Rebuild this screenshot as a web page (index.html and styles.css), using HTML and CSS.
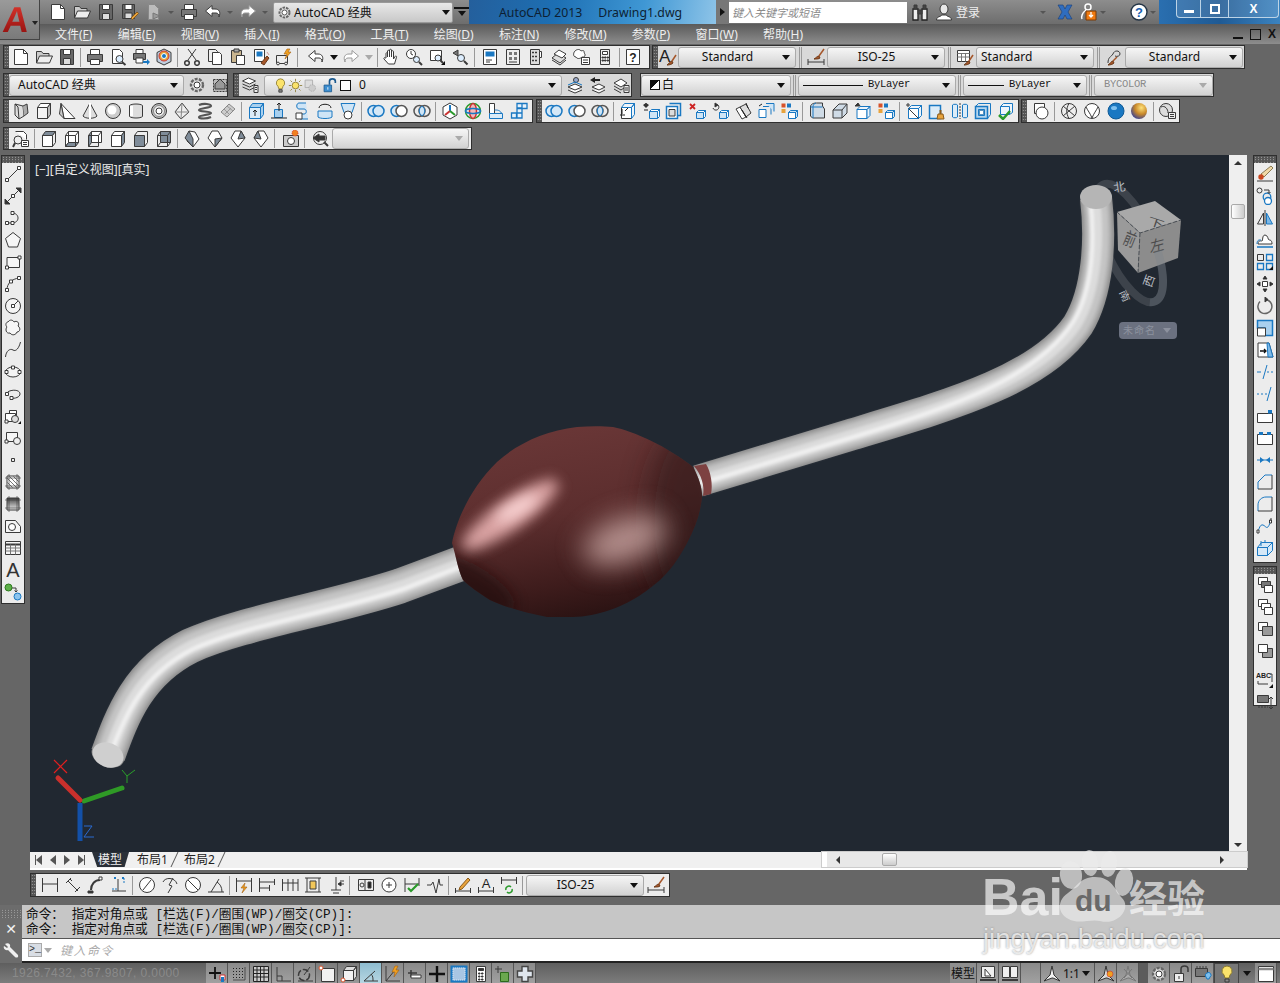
FILE: index.html
```html
<!DOCTYPE html>
<html lang="zh">
<head><meta charset="utf-8"><title>AutoCAD 2013</title><link rel="stylesheet" href="styles.css"></head>
<body>
<svg class="defs" width="0" height="0">
<defs>
<symbol id="new" viewBox="0 0 18 18"><path d="M2.5 1.5h9l4 4v11h-13z" fill="#fff"/><path d="M11.5 1.5v4h4"/></symbol>
<symbol id="open" viewBox="0 0 18 18"><path d="M1.5 15V3.5h5l1.5 2h6V8" fill="#ccc"/><path d="M1.5 15l3-7h13l-3 7z" fill="#eee"/></symbol>
<symbol id="save" viewBox="0 0 18 18"><path d="M2.5 1.5h13v15h-13z" fill="#666"/><path d="M5.5 1.5h7v5h-7z" fill="#fff"/><path d="M5.5 10.5h7v6h-7z" fill="#ddd"/></symbol>
<symbol id="saveas" viewBox="0 0 18 18"><path d="M1.5 1.5h12v14h-12z" fill="#666"/><path d="M4 1.5h7v5H4z" fill="#fff"/><path d="M4 10h7v5.500H4z" fill="#ddd"/><path d="M10 15l6-6 1.500 1.500-6 6z" fill="#e8a33c" stroke="#8a5a1a"/></symbol>
<symbol id="pubdoc" viewBox="0 0 18 18"><path d="M3.500 1.500h6l4 4v11h-10z" fill="#bbb" stroke="#888"/><path d="M8 10l7 3-7 3z" fill="#999" stroke="#777"/></symbol>
<symbol id="print" viewBox="0 0 18 18"><path d="M4.500 1.500h9v5h-9z" fill="#fff"/><path d="M1.500 6.500h15v7h-15z" fill="#777"/><path d="M4.500 11.500h9v5h-9z" fill="#fff"/></symbol>
<symbol id="preview" viewBox="0 0 18 18"><path d="M3.500 1.500h7l3 3v11h-10z" fill="#fff"/><circle cx="10.500" cy="11" r="3.500" fill="#def"/><path d="M13 14l3.500 3" stroke-width="2"/></symbol>
<symbol id="plot" viewBox="0 0 18 18"><path d="M4 1.500h7v4H4z" fill="#fff"/><path d="M1.500 5.500h12v6h-12z" fill="#777"/><path d="M4 10h7v5H4z" fill="#fff"/><path d="M11 13h4v-2l3 3-3 3v-2h-4z" fill="#1a78c2" stroke="none"/></symbol>
<symbol id="pub3d" viewBox="0 0 18 18"><path d="M9 1l7 3.500v9L9 17l-7-3.500v-9z" fill="#bfcfe0"/><circle cx="9" cy="8" r="5" fill="#e8a33c" stroke="#c33"/><circle cx="9" cy="8" r="2.500" fill="#1a78c2" stroke="#fff"/></symbol>
<symbol id="cut" viewBox="0 0 18 18"><path d="M5 1l8 11M13 1L5 12"/><circle cx="4" cy="15" r="2.300" stroke-width="1.500"/><circle cx="14" cy="15" r="2.300" stroke-width="1.500"/></symbol>
<symbol id="copy" viewBox="0 0 18 18"><path d="M2.500 1.500h7l2 2v10h-9z" fill="#eee"/><path d="M6.500 4.500h7l2 2v10h-9z" fill="#fff"/></symbol>
<symbol id="paste" viewBox="0 0 18 18"><path d="M2.500 2.500h10v12h-10z" fill="#c9b58f"/><path d="M5 1h5v3H5z" fill="#aaa"/><path d="M7.500 7.500h8v9h-8z" fill="#fff"/></symbol>
<symbol id="pblock" viewBox="0 0 18 18"><path d="M2.500 1.500h10v12h-10z" fill="#fff"/><path d="M4.500 3.500h6v5h-6z" fill="#1a78c2" stroke="none"/><path d="M9 15l6-7 2 2-5 7z" fill="#a5562a" stroke="#6b3a1a"/><path d="M15 4l2 3" stroke="#c99"/></symbol>
<symbol id="match" viewBox="0 0 18 18"><path d="M1.500 7.500h11v8h-11z" fill="#eee"/><circle cx="3" cy="15.500" r="1.400" fill="#fff"/><circle cx="11" cy="15.500" r="1.400" fill="#fff"/><path d="M12 1l-3 5h3l-2 5 6-7h-3l2-3z" fill="#f0a020" stroke="#a25e10" stroke-width=".6"/></symbol>
<symbol id="undo" viewBox="0 0 18 18"><path d="M8 2.500L1.500 8 8 13.500V10h4c2 0 3 1.500 3 4 2-5 0-8-4-8H8z" fill="#fff"/></symbol>
<symbol id="redo" viewBox="0 0 18 18"><path d="M10 2.500L16.500 8 10 13.500V10H6c-2 0-3 1.500-3 4-2-5 0-8 4-8h3z" fill="#fff" stroke="#9a9a9a"/></symbol>
<symbol id="hand" viewBox="0 0 18 18"><path d="M4 10V5.500c0-1 1.500-1 1.500 0V9 3c0-1 2-1 2 0v6V2c0-1 2-1 2 0v7-5.500c0-1 2-1 2 0V11l1.500-2.500c.7-1 2-.3 1.500.7L12.500 16h-6L2 11c-.6-1 .8-2 1.500-1z" fill="#fff"/></symbol>
<symbol id="zoomr" viewBox="0 0 18 18"><circle cx="6" cy="6" r="4.500" fill="#fff"/><path d="M6 3v3l2 1"/><circle cx="11.500" cy="11.500" r="3" fill="#def"/><path d="M14 14l3 3" stroke-width="2"/></symbol>
<symbol id="zoomw" viewBox="0 0 18 18"><path d="M2.500 2.500h11v10h-11z" fill="#fff"/><circle cx="10" cy="10" r="3" fill="#def"/><path d="M12.500 12.500l2.500 2.500" stroke-width="2"/><path d="M13 17l4-4v4z" fill="#111" stroke="none"/></symbol>
<symbol id="zoomp" viewBox="0 0 18 18"><path d="M7 2L2 5l5 3z" fill="#777"/><circle cx="10" cy="10" r="3.500" fill="#def"/><path d="M13 13l3.500 3.500" stroke-width="2"/></symbol>
<symbol id="props" viewBox="0 0 18 18"><path d="M2.500 1.500h13v15h-13z" fill="#fff"/><path d="M4.500 3.500h9v5h-9z" fill="#1a78c2" stroke="none"/><path d="M5 12h6M5 14h4"/></symbol>
<symbol id="center" viewBox="0 0 18 18"><path d="M2.500 1.500h13v15h-13z" fill="#eee"/><path d="M5 4h3v3H5zM10 4h3v3h-3zM5 9h3v3H5zM10 9h3v3h-3z" fill="#777" stroke="none"/><path d="M5 14h8"/></symbol>
<symbol id="palette" viewBox="0 0 18 18"><path d="M3.500 1.500h9v15h-9z" fill="#ddd"/><path d="M12.500 3.500h2v6h-2z" fill="#fff"/><path d="M5.500 4h1v1h-1zM8.500 4h1v1h-1zM5.500 8h1v1h-1zM8.500 8h1v1h-1zM5.500 12h1v1h-1zM8.500 12h1v1h-1z" fill="#555"/></symbol>
<symbol id="sheet" viewBox="0 0 18 18"><path d="M2 10l6-5 8 5-6 5z" fill="#ddd"/><path d="M4 6l5-4 7 4-4 4z" fill="#fff"/><path d="M2 12l8 5 6-5"/></symbol>
<symbol id="markup" viewBox="0 0 18 18"><path d="M2 3c2-2 5-2 6 0 2-1 4 0 3 2 2 1 1 5-2 4-2 2-5 2-6 0-3 0-3-4-1-6z" fill="#fff"/><path d="M8.500 9.500h8v7h-8z" fill="#fff"/><path d="M10 12h5M10 14.500h5"/></symbol>
<symbol id="calc" viewBox="0 0 18 18"><path d="M4.500 1.500h9v15h-9z" fill="#eee"/><path d="M6.500 3.500h5v3h-5z" fill="#fff"/><path d="M6 9h1.500v1H6zM8.500 9H10v1H8.500zM11 9h1.500v1H11zM6 12h1.500v1H6zM8.500 12H10v1H8.500zM11 12h1.500v1H11z" fill="#444"/></symbol>
<symbol id="help" viewBox="0 0 18 18"><path d="M2.500 1.500h13v15h-13z" fill="#fff"/><text x="9" y="14" font-size="12" font-family="Liberation Sans" font-weight="700" text-anchor="middle" fill="#222" stroke="none">?</text></symbol>
<symbol id="gear" viewBox="0 0 18 18"><circle cx="9" cy="9" r="6" fill="#ddd" stroke-dasharray="3 1.200" stroke-width="2.400" stroke="#666"/><circle cx="9" cy="9" r="3" fill="#fff"/></symbol>
<symbol id="wsset" viewBox="0 0 18 18"><path d="M2.500 3.500h13v12h-13z" fill="#bbb" stroke-dasharray="2 1"/><path d="M9 3l5 5v5H4V8z" fill="#999"/></symbol>
<symbol id="layers" viewBox="0 0 18 18"><path d="M1.500 5l6-3 7 3-6 3z" fill="#fff"/><path d="M1.500 8l7 3 6-3M1.500 11l7 3 6-3"/><path d="M13 9.500h4v7h-4z" fill="#eee"/><path d="M14 11.500h2M14 13.500h2"/></symbol>
<symbol id="laycur" viewBox="0 0 18 18"><circle cx="10" cy="4" r="2.500" fill="#9ac"/><path d="M2 11l7-3 7 3-7 3zM2 14l7 3 7-3" fill="#fff"/><path d="M2 9l7-3 7 3" stroke="#1a78c2"/></symbol>
<symbol id="layprev" viewBox="0 0 18 18"><path d="M1 4l5-3v2h5v2H6v2z" fill="#222" stroke="none"/><path d="M3 11l7-3 6 3-6 3zM3 14l7 3 6-3" fill="#fff"/></symbol>
<symbol id="laysnap" viewBox="0 0 18 18"><path d="M2 7l7-4 6 4-6 4z" fill="#fff"/><path d="M2 10l7 4 3-2M2 13l7 4"/><path d="M12 9.500h5v7h-5z" fill="#eee"/><path d="M13 12h3M13 14h3"/></symbol>
<symbol id="bulb" viewBox="0 0 18 18"><path d="M9 1a5 5 0 013 9l-1 3H7l-1-3A5 5 0 019 1z" fill="#fbe36b" stroke="#8a7a30"/><path d="M7 14h4v3H7z" fill="#888"/></symbol>
<symbol id="sun" viewBox="0 0 18 18"><circle cx="9" cy="9" r="4" fill="#fbe36b" stroke="#8a7a30"/><path d="M9 1v3M9 14v3M1 9h3M14 9h3M3 3l2 2M13 13l2 2M15 3l-2 2M3 15l2-2" stroke="#8a7a30"/></symbol>
<symbol id="vpfrz" viewBox="0 0 18 18"><path d="M2.500 2.500h9v9h-9z" fill="#ddd" stroke="#aaa"/><circle cx="11" cy="12" r="4" fill="#ccc" stroke="#aaa" stroke-dasharray="2 1"/></symbol>
<symbol id="lock" viewBox="0 0 18 18"><path d="M2.500 8.500h9v8h-9z" fill="#3d8ed0" stroke="#1c5a8f"/><path d="M9 8V4c0-4 7-4 7 0v2" stroke="#1c5a8f" stroke-width="2"/><path d="M7 11v3" stroke="#fff"/></symbol>
<symbol id="solid" viewBox="0 0 18 18"><path d="M3 2l8 2 1 10-5 3-4-4z" fill="#ddd"/><path d="M11 4l4-2 1 9-4 3" fill="#aaa"/><path d="M3 2l3 3 1 12"/></symbol>
<symbol id="box" viewBox="0 0 18 18"><path d="M2.500 5.500h10v11h-10z" fill="#f4f4f4"/><path d="M2.500 5.500l3-4h10l-3 4z" fill="#fff"/><path d="M12.500 5.500l3-4v11l-3 4z" fill="#bbb"/></symbol>
<symbol id="wedge" viewBox="0 0 18 18"><path d="M3 1.500l14 15H6z" fill="#fff"/><path d="M3 1.500L1.500 12 6 16.500z" fill="#ccc"/></symbol>
<symbol id="cone" viewBox="0 0 18 18"><path d="M9 1L2 14c2 3 12 3 14 0z" fill="#ddd"/><path d="M9 1v16" stroke="#fff" stroke-width="2"/></symbol>
<symbol id="sphere" viewBox="0 0 18 18"><circle cx="9" cy="9" r="7.500" fill="#ccc"/><circle cx="8" cy="8" r="4.500" fill="#fff" stroke="none"/></symbol>
<symbol id="cyl" viewBox="0 0 18 18"><path d="M2.500 3.500c2-2 11-2 13 0v11c-2 2-11 2-13 0z" fill="#ddd"/><path d="M4.500 4v10" stroke="#fff" stroke-width="3"/></symbol>
<symbol id="torus" viewBox="0 0 18 18"><circle cx="9" cy="9" r="7.500" fill="#bbb"/><circle cx="9" cy="9" r="5.500" fill="#eee" stroke="#888"/><circle cx="9" cy="9" r="3" fill="#fff"/></symbol>
<symbol id="pyr" viewBox="0 0 18 18"><path d="M9 1L2 10l6 7 8-7z" fill="#eee"/><path d="M9 1l-1 16M2 10l14 0" stroke="#888"/></symbol>
<symbol id="helix" viewBox="0 0 18 18"><path d="M3 3c5-2 12-1 12 1S3 6 3 8s12 1 12 3S3 13 3 15s8 2 12 0" stroke="#555" stroke-width="2.200"/></symbol>
<symbol id="plane" viewBox="0 0 18 18"><path d="M2 10l8-8 6 5-8 8z" fill="#ccc" stroke="#888"/><path d="M5 7l6 6M8 4l6 5M6 12l6-6" stroke="#999"/></symbol>
<symbol id="extrude" viewBox="0 0 18 18"><path d="M2.500 5.500h11v11h-11z" fill="#dcecf8" stroke="#1a78c2"/><path d="M2.500 5.500l3-4h11l-3 4zM13.500 5.500l3-4v11l-3 4z" fill="#a9d0ee" stroke="#1a78c2"/><path d="M8 14V9M6 10l2-2 2 2" stroke="#222"/></symbol>
<symbol id="press" viewBox="0 0 18 18"><path d="M4.500 7.500h8v8h-8z" fill="#a9d0ee" stroke="#1a78c2"/><path d="M9 9V1M7 3l2-2 2 2" stroke="#222"/><path d="M1 16h16" stroke="#222"/></symbol>
<symbol id="sweep" viewBox="0 0 18 18"><path d="M13 1H6C3 1 3 7 6 7h5c3 0 3 5 0 5H7v5h8" stroke="#1a78c2" fill="#cfe5f6"/><path d="M3 11h6v6H3z" fill="#fff"/></symbol>
<symbol id="revolve" viewBox="0 0 18 18"><path d="M3 6c0-5 12-5 12 0" stroke="#222"/><path d="M2 9h14v6c-2 2-12 2-14 0z" fill="#cfe5f6" stroke="#1a78c2"/></symbol>
<symbol id="loft" viewBox="0 0 18 18"><path d="M2 1.500h14l-3 9H5z" fill="#cfe5f6" stroke="#1a78c2"/><circle cx="9" cy="13" r="4" fill="#fff"/></symbol>
<symbol id="union" viewBox="0 0 18 18"><circle cx="6.500" cy="9" r="5.500" fill="#d5e8f7" stroke="#1a78c2" stroke-width="1.500"/><circle cx="11.500" cy="9" r="5.500" fill="#d5e8f7" stroke="#1a78c2" stroke-width="1.500"/></symbol>
<symbol id="subtr" viewBox="0 0 18 18"><circle cx="6.500" cy="9" r="5.500" fill="#d5e8f7" stroke="#1a78c2" stroke-width="1.500"/><circle cx="11.500" cy="9" r="5.500" fill="#fff" stroke="#555" stroke-width="1.500"/></symbol>
<symbol id="inter" viewBox="0 0 18 18"><circle cx="6.500" cy="9" r="5.500" stroke="#555" stroke-width="1.500"/><circle cx="11.500" cy="9" r="5.500" stroke="#555" stroke-width="1.500"/><path d="M9 4.200a5.500 5.500 0 010 9.600 5.500 5.500 0 010-9.600z" fill="#cfe5f6" stroke="#1a78c2"/></symbol>
<symbol id="move3" viewBox="0 0 18 18"><path d="M9 1l7 4v8l-7 4-7-4V5z" fill="#fff"/><path d="M9 9V3" stroke="#1a78c2" stroke-width="2"/><path d="M9 9l-5 4" stroke="#c33" stroke-width="2"/><path d="M9 9l5 4" stroke="#2a9a2a" stroke-width="2"/></symbol>
<symbol id="rot3" viewBox="0 0 18 18"><ellipse cx="9" cy="9" rx="7.500" ry="7.500" stroke="#2a9a2a" stroke-width="1.500"/><ellipse cx="9" cy="9" rx="3.500" ry="7.500" stroke="#c33" stroke-width="1.500" fill="#f3b7b7"/><ellipse cx="9" cy="9" rx="7.500" ry="2.500" stroke="#1a78c2" stroke-width="1.500"/></symbol>
<symbol id="align3" viewBox="0 0 18 18"><path d="M2.500 1.500h5v10h-5z" fill="#fff"/><path d="M2.500 11.500h13v5h-13z" fill="#dcecf8" stroke="#1a78c2"/><path d="M7.500 8c3 0 5 0 7 3" stroke="#1a78c2"/></symbol>
<symbol id="array3" viewBox="0 0 18 18"><path d="M7 1.500h5v5H7zM12 1.500h5v5h-5zM1.500 11h5v5h-5zM7 11h5v5H7zM7 6h5v5H7z" stroke="#1a78c2" stroke-width="1.300" fill="#e7f2fb"/></symbol>
<symbol id="cubef" viewBox="0 0 18 18"><path d="M2.500 5.500h10v11h-10z" fill="#fff"/><path d="M2.500 5.500l3-4h10l-3 4zM12.500 5.500l3-4v11l-3 4z" fill="#eef5fb" stroke="#1a78c2"/><path d="M3 12V7M1 13h5M6 9l3-3" stroke="#222"/></symbol>
<symbol id="movef" viewBox="0 0 18 18"><path d="M4 5V1M2 3h4M6 8H2" stroke="#222"/><path d="M1 3l3-2 3 2-3 3z" fill="#333" stroke="none"/><path d="M7.500 9.500h8v7h-8z" fill="#cfe5f6" stroke="#1a78c2"/><path d="M7.500 9.500l2-2h8l-2 2zM15.500 9.500l2-2v7l-2 2z" fill="#fff" stroke="#1a78c2"/></symbol>
<symbol id="offf" viewBox="0 0 18 18"><path d="M1.500 4.500h11v12h-11z" fill="#fff" stroke="#1a78c2" stroke-width="1.500"/><path d="M4.500 1.500h11v12h-3" stroke="#1a78c2" stroke-width="1.500"/><path d="M4 7.500h6v6.500H4z" fill="#ddd"/></symbol>
<symbol id="delf" viewBox="0 0 18 18"><path d="M2 2l5 5M7 2L2 7" stroke="#c22" stroke-width="1.800"/><path d="M8.500 10.500h7v6h-7z" fill="#cfe5f6" stroke="#1a78c2"/><path d="M8.500 10.500l2-2h7l-2 2zM15.500 10.500l2-2v6l-2 2z" fill="#fff" stroke="#1a78c2"/></symbol>
<symbol id="rotf" viewBox="0 0 18 18"><path d="M2 6a3 3 0 105-3" /><path d="M4 1l3 2-3 2z" fill="#222"/><path d="M8.500 10.500h7v6h-7z" fill="#cfe5f6" stroke="#1a78c2"/><path d="M8.500 10.500l2-2h7l-2 2zM15.500 10.500l2-2v6l-2 2z" fill="#fff" stroke="#1a78c2"/></symbol>
<symbol id="taper" viewBox="0 0 18 18"><path d="M2 7l4-2 6 10-4 2z" fill="#fff"/><path d="M6 5l6-3 5 9-5 4z" fill="#ddd"/><path d="M8 8l5 8M12 1l2 5" stroke="#222"/></symbol>
<symbol id="copyf" viewBox="0 0 18 18"><path d="M2 7.500h7v8H2z" fill="#fff" stroke="#1a78c2"/><path d="M6 4.500h8v8" stroke="#1a78c2"/><path d="M9 1.500h8v8" stroke="#1a78c2" fill="#cfe5f6"/><path d="M2 4l3-2" stroke="#222"/></symbol>
<symbol id="colorf" viewBox="0 0 18 18"><path d="M1.500 1.500h4v4h-4z" fill="#d7522a" stroke="none"/><path d="M7 1.500h4v4H7z" fill="#1a78c2" stroke="none"/><path d="M1.500 7h4v4h-4z" fill="#e8a33c" stroke="none"/><path d="M8.500 10.500h7v6h-7z" fill="#fff" stroke="#1a78c2"/><path d="M8.500 10.500l2-2h7l-2 2zM15.500 10.500l2-2v6l-2 2z" fill="#cfe5f6" stroke="#1a78c2"/></symbol>
<symbol id="fedge" viewBox="0 0 18 18"><path d="M2.500 5c0-3 3-4 6-4h6v3l2 3v9h-12l-2-2z" fill="#cfdbe6"/><path d="M2.500 5h12v0M8 1c-3 1-3 3-3 5v10" stroke="#1a78c2"/></symbol>
<symbol id="cedge" viewBox="0 0 18 18"><path d="M2 8l6-6h8v9l-5 5H2z" fill="#cfdbe6"/><path d="M2 8h9v8M11 8l5-6" /></symbol>
<symbol id="cpedge" viewBox="0 0 18 18"><path d="M1 4l3-3 2 3H4z" fill="#333"/><path d="M3 7.500h10v9H3z" fill="#fff" stroke="#1a78c2"/><path d="M3 7.500l3-3h10l-3 3zM13 7.500l3-3v9l-3 3z" fill="#eef5fb" stroke="#1a78c2"/></symbol>
<symbol id="imprint" viewBox="0 0 18 18"><path d="M1 3h4M3 1v4"/><path d="M3.500 6.500h10v10h-10z" fill="#fff" stroke="#1a78c2"/><path d="M3.500 6.500l3-3h10l-3 3zM13.500 6.500l3-3v10l-3 3z" fill="#eef5fb" stroke="#1a78c2"/><path d="M3.500 6.500l10 10"/></symbol>
<symbol id="clean" viewBox="0 0 18 18"><path d="M1.500 3.500h11v13h-11z" fill="#dcecf8" stroke="#1a78c2" stroke-width="1.500"/><path d="M9 17l1-5h5l1 5z" fill="#e8a33c" stroke="#8a5a1a"/><path d="M12.500 12V8" stroke="#8a5a1a" stroke-width="2"/></symbol>
<symbol id="separ" viewBox="0 0 18 18"><path d="M1.500 3c0-1 5-1 5 0v12c0 1-5 1-5 0z" fill="#dcecf8" stroke="#1a78c2"/><path d="M11.500 3c0-1 5-1 5 0v12c0 1-5 1-5 0z" fill="#dcecf8" stroke="#1a78c2"/><path d="M9 1v16" stroke-dasharray="2 1"/></symbol>
<symbol id="shell" viewBox="0 0 18 18"><path d="M1.500 4.500h12v12h-12z" fill="#b6d6ee" stroke="#1a78c2" stroke-width="1.500"/><path d="M1.500 4.500l3-3h12v11l-3 4" stroke="#1a78c2"/><path d="M4.500 7.500h6v6h-6z" fill="#5b93c0" stroke="#1a78c2"/><path d="M6 9h3v3H6z" fill="#fff" stroke="none"/></symbol>
<symbol id="check" viewBox="0 0 18 18"><path d="M3.500 4.500h9v8h-9zM3.500 4.500l3-3h9v9l-3 2" fill="#eef5fb" stroke="#1a78c2"/><path d="M2 13l4 4 7-8" stroke="#2a9a2a" stroke-width="2.500"/></symbol>
<symbol id="ball3" viewBox="0 0 18 18"><path d="M2.500 1.500h10v10h-10z" fill="#fff"/><circle cx="10" cy="11" r="6" fill="#fff"/></symbol>
<symbol id="wire" viewBox="0 0 18 18"><circle cx="9" cy="9" r="7.500" fill="#eee"/><path d="M3 4c4 3 8 7 12 10M15 4C11 7 7 11 3 14M9 1.500c-3 5-3 10 0 15"/></symbol>
<symbol id="hid" viewBox="0 0 18 18"><circle cx="9" cy="9" r="7.500" fill="#fff"/><path d="M3 5c2 4 4 6 6 11M15 5c-2 4-4 6-6 11"/></symbol>
<symbol id="concept" viewBox="0 0 18 18"><circle cx="9" cy="9" r="8" fill="#1a78c2" stroke="#0f5a96"/><ellipse cx="7" cy="6" rx="3" ry="2" fill="#7ec0ee" stroke="none"/></symbol>
<symbol id="real" viewBox="0 0 18 18"><defs><radialGradient id="rg" cx=".65" cy=".3" r=".8"><stop offset="0" stop-color="#ffe27a"/><stop offset=".5" stop-color="#c8882a"/><stop offset="1" stop-color="#2a3aa0"/></radialGradient></defs><circle cx="9" cy="9" r="8" fill="url(#rg)" stroke="none"/></symbol>
<symbol id="vsman" viewBox="0 0 18 18"><circle cx="7" cy="8" r="6.500" fill="#ddd"/><path d="M2 5c4-2 7 2 7 6" /><path d="M9.500 10.500h7v6h-7z" fill="#eee"/><path d="M11 12.500h4M11 14.500h4"/></symbol>
<symbol id="vman" viewBox="0 0 18 18"><path d="M3.500 1.500h8l3 3v5" fill="#fff"/><circle cx="6" cy="10" r="4" fill="#eee"/><path d="M3 13l-2 4" stroke-width="2"/><path d="M9.500 10.500h7v6h-7z" fill="#fff"/><path d="M11 12.500h4M11 14.500h4"/></symbol>
<symbol id="vtop" viewBox="0 0 18 18"><path d="M2.500 5.500h10v11h-10z" fill="#fff"/><path d="M2.500 5.500l3-4h10l-3 4z" fill="#7f8c99"/><path d="M12.500 5.500l3-4v11l-3 4z" fill="#eee"/></symbol>
<symbol id="vbot" viewBox="0 0 18 18"><path d="M5.500 1.500h10v11h-10z" fill="#fff"/><path d="M2.500 5.500l3-4v11l-3 4z" fill="#fff"/><path d="M2.500 16.500l3-4h10l-3 4z" fill="#7f8c99"/><path d="M2.500 5.500h10l3-4M12.500 5.500v11"/></symbol>
<symbol id="vleft" viewBox="0 0 18 18"><path d="M2.500 5.500l3-4v11l-3 4z" fill="#7f8c99"/><path d="M5.500 1.500h10v11h-10z" fill="#fff"/><path d="M2.500 5.500h10l3-4M12.500 5.500v11h-10"/></symbol>
<symbol id="vright" viewBox="0 0 18 18"><path d="M2.500 5.500h10v11h-10zM2.500 5.500l3-4h10l-3 4z" fill="#fff"/><path d="M12.500 5.500l3-4v11l-3 4z" fill="#7f8c99"/></symbol>
<symbol id="vfront" viewBox="0 0 18 18"><path d="M2.500 5.500l3-4h10v11l-3 4z" fill="#eee"/><path d="M2.500 5.500h10v11h-10z" fill="#7f8c99"/></symbol>
<symbol id="vback" viewBox="0 0 18 18"><path d="M5.500 1.500h10v11h-10z" fill="#7f8c99"/><path d="M2.500 5.500h10v11h-10zM2.500 5.500l3-4M12.500 5.500l3-4M2.500 16.500l3-4M12.500 16.500l3-4"/></symbol>
<symbol id="iso1" viewBox="0 0 18 18"><path d="M6 1l6 1 4 7-6 8-6-6z" fill="#fff"/><path d="M2 8l4-7 4 8v8z" fill="#7f8c99"/></symbol>
<symbol id="iso2" viewBox="0 0 18 18"><path d="M6 1h6l4 7-7 9-7-9z" fill="#fff"/><path d="M9 17V9l7-1z" fill="#7f8c99"/></symbol>
<symbol id="iso3" viewBox="0 0 18 18"><path d="M6 1h6l4 7-7 9-7-9z" fill="#fff"/><path d="M12 1l4 7-7 1z" fill="#7f8c99"/></symbol>
<symbol id="iso4" viewBox="0 0 18 18"><path d="M6 1h6l4 7-7 9-7-9z" fill="#fff"/><path d="M6 1L2 8l7 1z" fill="#7f8c99"/></symbol>
<symbol id="camera" viewBox="0 0 18 18"><path d="M1.500 5.500h15v11h-15z" fill="#ccc"/><circle cx="9" cy="11" r="3.500" fill="#fff"/><circle cx="13" cy="3" r="3" fill="#f08020" stroke="#c33" stroke-dasharray="1 1"/></symbol>
<symbol id="backv" viewBox="0 0 18 18"><circle cx="8" cy="8" r="6.500" fill="#eee"/><path d="M1 8l6-4v2h6v4H7v2z" fill="#333"/><path d="M12 12l4 4" stroke-width="2"/></symbol>
<symbol id="line" viewBox="0 0 18 18"><path d="M3 15L15 3"/><path d="M1.500 13.500h3v3h-3zM13.500 1.500h3v3h-3z" fill="#fff"/></symbol>
<symbol id="xline" viewBox="0 0 18 18"><path d="M3 15L15 3" /><path d="M1 17v-5l5 5zM17 1v5l-5-5z" fill="#333"/><path d="M7.500 9h3v3h-3z" fill="#fff" transform="translate(0 -1.500)"/></symbol>
<symbol id="pline" viewBox="0 0 18 18"><path d="M3 14h5c8 0 8-10 0-10"/><path d="M1.500 12.500h3v3h-3zM7 12.500h3v3H7zM7 2.500h3v3H7z" fill="#fff"/></symbol>
<symbol id="poly" viewBox="0 0 18 18"><path d="M9 1.500l7.500 6-3 8.500h-9l-3-8.500z" fill="#f6f6f6"/></symbol>
<symbol id="rect" viewBox="0 0 18 18"><path d="M3 4.500h12.500v10H3z" fill="#f6f6f6" /><path d="M1.500 13h3v3h-3zM14 3h3v3h-3z" fill="#fff"/></symbol>
<symbol id="arc" viewBox="0 0 18 18"><path d="M3 15C3 8 8 4 15 3"/><path d="M1.500 13.500h3v3h-3zM5.500 5h3v3h-3zM13.500 1.500h3v3h-3z" fill="#fff"/></symbol>
<symbol id="circ" viewBox="0 0 18 18"><circle cx="9" cy="9" r="7.500" fill="#f4f4f4"/><path d="M9 9l5-5"/><path d="M7.500 7.500h3v3h-3z" fill="#fff"/></symbol>
<symbol id="cloud" viewBox="0 0 18 18"><path d="M4 3c2-3 5-2 6 0 3-2 6 1 4 4 3 2 2 6-1 6-1 3-5 4-7 1-4 1-5-4-3-6-2-2-1-5 1-5z" fill="#f6f6f6"/></symbol>
<symbol id="spline" viewBox="0 0 18 18"><path d="M1.500 16C2 10 6 7 9 9c3 2 6-2 7.500-8" /></symbol>
<symbol id="ell" viewBox="0 0 18 18"><ellipse cx="9" cy="9" rx="7.500" ry="5" fill="#f4f4f4"/><path d="M1 7.500h3v3H1zM14 7.500h3v3h-3zM7.500 3h3v3h-3z" fill="#fff"/></symbol>
<symbol id="earc" viewBox="0 0 18 18"><path d="M3 9c-1-4 13-6 13 0 0 3-5 5-9 4"/><path d="M1.500 7.500h3v3h-3zM6 11.500h3v3H6z" fill="#fff"/></symbol>
<symbol id="insert" viewBox="0 0 18 18"><path d="M5.500 3.500h7v6h-7z" fill="#fff"/><path d="M1.500 6.500h10v8h-10z" fill="#fff"/><circle cx="11" cy="12" r="3.500" fill="#ddd"/><path d="M1 13h3v3H1z" fill="#fff"/><path d="M14 17l3-3v3z" fill="#111" stroke="none"/></symbol>
<symbol id="block" viewBox="0 0 18 18"><path d="M2.500 3.500h11v9h-11z" fill="#f6f6f6"/><circle cx="13" cy="12" r="3.500" fill="#eee"/><path d="M1 11h3v3H1z" fill="#fff"/></symbol>
<symbol id="point" viewBox="0 0 18 18"><path d="M7.500 7.500h3v3h-3z"/></symbol>
<symbol id="hatch" viewBox="0 0 18 18"><path d="M3 3h12v12H3z" fill="#fff"/><path d="M5 3l10 10M3 5l10 10M9 3l6 6M3 9l6 6" stroke="#777"/><path d="M1 5h16M1 13h16M5 1v16M13 1v16" stroke-width=".6"/></symbol>
<symbol id="grad" viewBox="0 0 18 18"><defs><linearGradient id="gg" x2="0" y2="1"><stop offset="0" stop-color="#444"/><stop offset="1" stop-color="#eee"/></linearGradient></defs><path d="M3 3h12v12H3z" fill="url(#gg)"/><path d="M1 5h16M1 13h16M5 1v16M13 1v16" stroke-width=".6"/></symbol>
<symbol id="region" viewBox="0 0 18 18"><path d="M1.500 3.500h10l5 6v6h-15z" fill="#f6f6f6"/><circle cx="8" cy="10" r="3.500" fill="#fff"/></symbol>
<symbol id="table" viewBox="0 0 18 18"><path d="M1.500 2.500h15v13h-15z" fill="#f6f6f6"/><path d="M1.500 5.500h15" stroke-width="2"/><path d="M1.500 9h15M1.500 12h15M6.500 5.500v10M11.500 5.500v10" stroke="#777"/></symbol>
<symbol id="addsel" viewBox="0 0 18 18"><circle cx="4.500" cy="4.500" r="3.500" fill="#5eb04a" stroke="#2c7a1c"/><circle cx="13.500" cy="13.500" r="3.500" fill="#8cc4ee" stroke="#1a78c2"/><path d="M8 5h4v4M10.500 7.500l1.500 1.500 1.500-1.500"/></symbol>
<symbol id="erase" viewBox="0 0 18 18"><path d="M1 16h16" /><path d="M15 1l2 2L8 12l-3-3z" fill="#f0d9a8" stroke="#8a7a50"/><circle cx="5" cy="12" r="2.700" fill="#c9471f" stroke="none"/></symbol>
<symbol id="copy2" viewBox="0 0 18 18"><circle cx="3.500" cy="3.500" r="2.500"/><circle cx="11" cy="10" r="3.800" stroke="#1a78c2" stroke-width="1.300"/><circle cx="12" cy="14" r="3.500" stroke="#1a78c2" stroke-width="1.300" fill="#fff"/><path d="M8 3h5v3M11.500 5l1.500 1.500L14.500 5"/></symbol>
<symbol id="mirror" viewBox="0 0 18 18"><path d="M7.500 4v11h-6z" /><path d="M10.500 4v11h6z" fill="#7db8e6" stroke="#1a78c2"/><path d="M9 1v16"/></symbol>
<symbol id="offset" viewBox="0 0 18 18"><path d="M2 13c0-4 3-3 4-3s0-6 3-6 3 5 4 5 3 0 3 4z" fill="#fff"/><path d="M1 16h16" stroke="#1a78c2" stroke-width="1.500"/><path d="M1 13c0-5 3-4 4-4" stroke="#1a78c2"/></symbol>
<symbol id="array" viewBox="0 0 18 18"><path d="M1.500 1.500h6v6h-6z"/><path d="M10.500 1.500h6v6h-6zM1.500 10.500h6v6h-6zM10.500 10.500h6v6h-6z" stroke="#1a78c2" stroke-width="1.300"/><path d="M13 17l4-4v4z" fill="#111" stroke="none"/></symbol>
<symbol id="move" viewBox="0 0 18 18"><path d="M9 1l-2 3h4zM9 17l-2-3h4zM1 9l3-2v4zM17 9l-3-2v4z" fill="#222"/><path d="M6.500 6.500h5v5h-5z" fill="#fff"/></symbol>
<symbol id="rotate" viewBox="0 0 18 18"><path d="M9 2.500a7 7 0 11-5 2" stroke-width="1.500" stroke="#666"/><path d="M9 0l3 2.500L9 5z" fill="#333"/></symbol>
<symbol id="scale" viewBox="0 0 18 18"><path d="M1.500 1.500h15v15H9V9H1.500z" fill="#a9d0ee" stroke="#1a78c2" stroke-width="1.500"/><path d="M1.500 9h8v8h-8z" fill="#fff"/></symbol>
<symbol id="stretch" viewBox="0 0 18 18"><path d="M2 2h11l4 14H2z" fill="#fff"/><path d="M11 2h2l4 14h-5z" fill="#7db8e6" stroke="#1a78c2"/><path d="M4 10h6M8 8l2 2-2 2" stroke="#111" stroke-width="1.300"/></symbol>
<symbol id="trim" viewBox="0 0 18 18"><path d="M1 9h4" stroke="#1a78c2"/><path d="M7 16l4-14" stroke="#1a78c2"/><path d="M11 9h2M15 9h2" stroke="#1a78c2" /></symbol>
<symbol id="extend" viewBox="0 0 18 18"><path d="M1 9h2M5 9h2M9 9h2" stroke="#1a78c2"/><path d="M11 16l4-14" stroke="#1a78c2"/></symbol>
<symbol id="brkp" viewBox="0 0 18 18"><path d="M1.500 6.500h15v9h-15z" fill="#fff"/><path d="M12 3h4v3.500h-4z" fill="#1a78c2" stroke="none"/></symbol>
<symbol id="brk" viewBox="0 0 18 18"><path d="M1.500 5.500h15v10h-15z" fill="#fff"/><path d="M3 3h4v3H3zM11 3h4v3h-4z" fill="#1a78c2" stroke="none"/></symbol>
<symbol id="join" viewBox="0 0 18 18"><path d="M1 9h16" stroke="#1a78c2"/><path d="M4 6l4 3-4 3zM14 6l-4 3 4 3z" fill="#1a78c2" stroke="none"/></symbol>
<symbol id="cham" viewBox="0 0 18 18"><path d="M2 16V9l7-7h7" stroke="#1a78c2"/><path d="M2 16h14V2" /></symbol>
<symbol id="fillet" viewBox="0 0 18 18"><path d="M2 16V10c0-5 4-8 8-8h6" stroke="#1a78c2"/><path d="M2 16h14V2" /></symbol>
<symbol id="blend" viewBox="0 0 18 18"><path d="M2 15c1-3 2-8 5-7s4 6 7-2" stroke="#1a78c2"/><path d="M1 13h2v3H1zM13.500 3h2v3h-2z" fill="#fff"/><path d="M15 1l0 3"/></symbol>
<symbol id="explode" viewBox="0 0 18 18"><path d="M1.500 8.500h10v8h-10zM1.500 8.500l4-5h11l-5 5zM11.500 8.500l5-5v8l-5 5z" stroke="#1a78c2" fill="#d5e8f7"/><path d="M5 2l0 5M9 1v3" stroke="#1a78c2"/></symbol>
<symbol id="ord1" viewBox="0 0 18 18"><path d="M2.500 1.500h9v7h-9z" fill="#fff"/><path d="M5.500 5.500h9v6h-9z" fill="#777"/><path d="M8.500 9.500h8v7h-8z" fill="#fff"/></symbol>
<symbol id="ord2" viewBox="0 0 18 18"><path d="M2.500 1.500h9v7h-9z" fill="#fff"/><path d="M5.500 5.500h9v6h-9z" fill="#fff"/><path d="M8.500 9.500h8v7h-8z" fill="#fff"/></symbol>
<symbol id="ord3" viewBox="0 0 18 18"><path d="M2.500 2.500h9v8h-9z" fill="#fff"/><path d="M6.500 6.500h10v9h-10z" fill="#999"/></symbol>
<symbol id="ord4" viewBox="0 0 18 18"><path d="M6.500 6.500h10v9h-10z" fill="#999"/><path d="M2.500 2.500h9v8h-9z" fill="#fff"/></symbol>
<symbol id="abc" viewBox="0 0 18 18"><text x="0" y="7" font-size="7" font-family="Liberation Sans" font-weight="700" fill="#222" stroke="none">ABC</text><path d="M14 3h2v8M2 10v3h10"/><path d="M13 17l4-4v4z" fill="#111" stroke="none"/></symbol>
<symbol id="txtsc" viewBox="0 0 18 18"><path d="M1.500 2.500h11v7h-11z" fill="#777"/><path d="M2 14h10" stroke-dasharray="2 1"/><path d="M15 4v12M13 6l2-2 2 2M13 14l2 2 2-2"/></symbol>
<symbol id="dlin" viewBox="0 0 18 18"><path d="M1.500 2v14M16.500 2v14M1.500 8h15"/></symbol>
<symbol id="dal" viewBox="0 0 18 18"><path d="M4 5l10 10M2 7l5-5M11 16l5-5M6 3l2 2"/></symbol>
<symbol id="darc" viewBox="0 0 18 18"><path d="M4 14C4 8 8 4 13 4" stroke-width="2"/><path d="M1 15h5v2H1z" fill="#333"/><path d="M12 1h3v3h-3z" fill="#fff"/></symbol>
<symbol id="dord" viewBox="0 0 18 18"><path d="M2 15h14M8 15V3" /><path d="M2 13h6M14 2v6" stroke="#1a78c2" stroke-dasharray="2 1"/><path d="M4 1h2v2H4zM12 1h2v2h-2z" fill="#1a78c2" stroke="none"/></symbol>
<symbol id="drad" viewBox="0 0 18 18"><circle cx="9" cy="9" r="7.500" fill="#fff"/><path d="M9 9l4-5M5 14l4-5"/></symbol>
<symbol id="djog" viewBox="0 0 18 18"><path d="M2 6c2-5 12-5 14 2M12 2L8 9l3 1-4 7"/></symbol>
<symbol id="ddia" viewBox="0 0 18 18"><circle cx="9" cy="9" r="7.500" fill="#fff"/><path d="M4 4l10 10"/></symbol>
<symbol id="dang" viewBox="0 0 18 18"><path d="M1 16h16M4 16l8-13"/><path d="M10 6c3 2 5 5 5 10" /></symbol>
<symbol id="dqk" viewBox="0 0 18 18"><path d="M1.500 2v14M16.500 2v14M1.500 5h15"/><path d="M10 7l-4 5h3l-2 5 5-6H9z" fill="#f0a020" stroke="#a25e10" stroke-width=".6"/></symbol>
<symbol id="dbase" viewBox="0 0 18 18"><path d="M1.500 2v14M1.500 6h15M1.500 12h10M16.500 3v6M11.500 9v6"/></symbol>
<symbol id="dcont" viewBox="0 0 18 18"><path d="M1.500 3v12M7 3v12M12 3v12M17 3v12M1.500 7H17"/></symbol>
<symbol id="dspc" viewBox="0 0 18 18"><path d="M1 2h16M1 16h16M3 2v14M15 2v14"/><path d="M6 5h6v8H6z" fill="#f2c75a"/></symbol>
<symbol id="dbrk" viewBox="0 0 18 18"><path d="M9 1v13M4 14h10M6 17h6M13 5h4M13 8h4" /><path d="M11 8l3-2v4z" fill="#222"/></symbol>
<symbol id="dtol" viewBox="0 0 18 18"><path d="M1.500 3.500h15v11h-15zM8 3.500v11"/><circle cx="5" cy="9" r="2"/><path d="M11 6h3v6h-3z" fill="#222"/></symbol>
<symbol id="dcen" viewBox="0 0 18 18"><circle cx="9" cy="9" r="7" fill="#fff"/><path d="M6 9h6M9 6v6"/></symbol>
<symbol id="dins" viewBox="0 0 18 18"><path d="M2 2v14M16 2v8M2 8h14"/><path d="M5 12l3 3 7-7" stroke="#2a9a2a" stroke-width="2.200"/></symbol>
<symbol id="djogl" viewBox="0 0 18 18"><path d="M1 9h4l2-3 3 11 3-14 1 6h3"/></symbol>
<symbol id="dedit" viewBox="0 0 18 18"><path d="M1.500 12v5M16.500 12v5M1.500 15h15"/><path d="M6 11L14 2l2 2-8 9-3 1z" fill="#e8a33c" stroke="#8a5a1a"/></symbol>
<symbol id="dtxt" viewBox="0 0 18 18"><path d="M1.500 11v6M16.500 11v6M1.500 15h15"/><text x="9" y="12" font-size="13" font-family="Liberation Sans" text-anchor="middle" fill="#222" stroke="none">A</text></symbol>
<symbol id="dupd" viewBox="0 0 18 18"><path d="M1.500 1v7M16.500 1v7M1.500 4h15"/><path d="M6 14a3 3 0 015-3M12 13a3 3 0 01-5 3" stroke="#2a9a2a" stroke-width="1.500"/></symbol>
<symbol id="dstyle" viewBox="0 0 18 18"><path d="M1 11v6M17 11v6M1 14h16"/><path d="M7 11c2-1 3-3 5-3l1 2c-1 1-3 1-6 1z" fill="#a5562a" stroke="#6b3a1a"/><path d="M12 8l5-7" stroke="#a5562a" stroke-width="1.500"/></symbol>
<symbol id="tstyle" viewBox="0 0 18 18"><text x="0" y="14" font-size="17" font-family="Liberation Sans" fill="#222" stroke="none">A</text><path d="M8 17c2-1 3-4 5-4l1 2c-1 1-3 2-6 2z" fill="#a5562a" stroke="#6b3a1a"/><path d="M13 13l4-6" stroke="#a5562a" stroke-width="1.500"/></symbol>
<symbol id="tbstyle" viewBox="0 0 18 18"><path d="M1.500 2.500h12v11h-12z" fill="#fff"/><path d="M1.500 5.500h12M1.500 9h12M5.500 5.500v8M9.500 5.500v8" stroke="#777"/><path d="M8 17c2-1 3-4 5-4l1 2c-1 1-3 2-6 2z" fill="#a5562a" stroke="#6b3a1a"/><path d="M13 13l4-6" stroke="#a5562a" stroke-width="1.500"/></symbol>
<symbol id="mlstyle" viewBox="0 0 18 18"><path d="M3 15C3 9 6 9 8 6c1-4 7-4 7 0 0 2-3 3-5 2"/><path d="M3 17c2-1 3-4 5-4l1 2c-1 1-3 2-6 2z" fill="#a5562a" stroke="#6b3a1a"/><path d="M8 13l4-4" stroke="#a5562a" stroke-width="1.500"/></symbol>
<symbol id="snapinf" viewBox="0 0 18 18"><path d="M1 8h12M7 2v12" stroke-width="1.800" stroke="#111"/><path d="M12 10h5v5h-5z" fill="#fff" stroke="#c33"/><path d="M13 12h3v5h-3z" fill="#1a78c2" stroke="none"/></symbol>
<symbol id="snap" viewBox="0 0 18 18"><path d="M3 3h1v1H3zM6 3h1v1H6zM9 3h1v1H9zM12 3h1v1h-1zM3 6h1v1H3zM6 6h1v1H6zM9 6h1v1H9zM12 6h1v1h-1zM3 9h1v1H3zM6 9h1v1H6zM9 9h1v1H9zM12 9h1v1h-1zM3 12h1v1H3zM6 12h1v1H6zM9 12h1v1H9zM12 12h1v1h-1z" fill="#222" stroke="none"/><path d="M15 2v13H3" stroke-width=".8"/></symbol>
<symbol id="grid" viewBox="0 0 18 18"><path d="M1.500 1.500h15v15h-15zM1.500 5h15M1.500 8.500h15M1.500 12h15M5 1.500v15M8.500 1.500v15M12 1.500v15" fill="#ccc" stroke="#222"/></symbol>
<symbol id="ortho" viewBox="0 0 18 18"><path d="M3 2v14h14M3 11h5v5"/></symbol>
<symbol id="polar" viewBox="0 0 18 18"><path d="M2 16h15"/><circle cx="8" cy="10" r="5.500" stroke-width="1.500" stroke-dasharray="6 2"/><path d="M8 10l6-8"/></symbol>
<symbol id="osnap" viewBox="0 0 18 18"><path d="M3.500 3.500h13v13h-13z" fill="#f2f2f2"/><circle cx="3" cy="3" r="2" fill="#fff" stroke="#d7522a"/></symbol>
<symbol id="osnap3" viewBox="0 0 18 18"><path d="M3.500 5.500h10v10h-10z" fill="#f2f2f2"/><path d="M3.500 5.500l3-4h10l-3 4zM13.500 5.500l3-4v10l-3 4z" fill="#ddd"/><circle cx="3" cy="15" r="2" fill="#fff" stroke="#d7522a"/></symbol>
<symbol id="ducs" viewBox="0 0 18 18"><path d="M2 16h14M2 16L13 6"/><path d="M9 9c2 2 2 4 2 7"/></symbol>
<symbol id="otrack" viewBox="0 0 18 18"><path d="M2 1v15h14M2 16L11 5"/><path d="M11 1l-3 6h3l-1 5 5-7h-3l2-4z" fill="#f0a020" stroke="#a25e10" stroke-width=".6"/></symbol>
<symbol id="dynp" viewBox="0 0 18 18"><path d="M2 8h9M5 5v7" stroke-width="1.500"/><path d="M5 10h10v3H5z" fill="#fff"/></symbol>
<symbol id="plus" viewBox="0 0 18 18"><path d="M9 1v16M1 9h16" stroke-width="2.400" stroke="#111"/></symbol>
<symbol id="transp" viewBox="0 0 18 18"><path d="M1.500 1.500h15v15h-15z" fill="#8ab4dc" stroke="#1a78c2" stroke-width="2"/><path d="M3 3h12v12H3z" fill="#a9c6e3" stroke="#fff" stroke-dasharray="1 1" stroke-width=".6"/></symbol>
<symbol id="qprop" viewBox="0 0 18 18"><path d="M4.500 1.500h9v15h-9z" fill="#fff"/><path d="M6.500 3.500h5v2h-5z" fill="#333"/><path d="M6.500 8h1.500v1H6.500zM9.500 8H11v1H9.500zM6.500 11h1.500v1H6.500zM9.500 11H11v1H9.500zM6.500 14h1.500v1H6.500zM9.500 14H11v1H9.500z" fill="#333"/></symbol>
<symbol id="selcyc" viewBox="0 0 18 18"><path d="M1 4h7M4 1v7"/><path d="M6.500 7.500h8v9h-8z" fill="#6aa84f" stroke="#2c6a1c"/></symbol>
<symbol id="cross" viewBox="0 0 18 18"><path d="M6 1.500h6V6h4.500v6H12v4.500H6V12H1.500V6H6z" fill="#dfe6ee" stroke="#444" stroke-width="1.400"/></symbol>
<symbol id="mdl" viewBox="0 0 18 18"><path d="M2.500 1.500h13v11h-13z" fill="#eee"/><path d="M6 4v7h6z" fill="#fff"/><path d="M1 15h16" stroke-width="2"/></symbol>
<symbol id="lyt" viewBox="0 0 18 18"><path d="M1.500 1.500h7v11h-7zM9.500 1.500h7v11h-7z" fill="#eee"/><path d="M1 15h16" stroke-width="2"/></symbol>
<symbol id="anno" viewBox="0 0 18 18"><path d="M9 1l2 9 6 6-7-3-1 0-8 3 6-6z" fill="#f2f2f2" stroke="#333"/></symbol>
<symbol id="anno2" viewBox="0 0 18 18"><path d="M9 1l2 9 6 6-7-3-1 0-8 3 6-6z" fill="#dadada" stroke="#333"/><circle cx="13" cy="9" r="3" fill="#f0a020" stroke="#c33" stroke-width=".6"/></symbol>
<symbol id="anno3" viewBox="0 0 18 18"><path d="M9 1l2 9 6 6-7-3-1 0-8 3 6-6z" fill="#aaa" stroke="#777"/><path d="M5 4l8 9M13 4l-8 9" stroke="#777"/></symbol>
<symbol id="unlock" viewBox="0 0 18 18"><path d="M2.500 8.500h9v8h-9z" fill="#eee"/><path d="M9 8V4c0-4 7-4 7 0v3" stroke-width="1.500"/><path d="M7 11v3"/></symbol>
<symbol id="hw" viewBox="0 0 18 18"><path d="M1.500 3.500h12v8h-12z" fill="#777"/><path d="M3 1v2M6 1v2M9 1v2M12 1v2"/><path d="M13 8a2.500 2.500 0 013 4l-1 2h-2l-1-2a2.500 2.500 0 011-4z" fill="#7ec0ee" stroke="#1a78c2"/></symbol>
<symbol id="win" viewBox="0 0 18 18"><path d="M1.500 1.500h15v15h-15z" fill="#fff"/><path d="M1.500 4h15" stroke-width="2.500" stroke="#888"/></symbol>
<symbol id="binoc" viewBox="0 0 18 18"><path d="M2 6h5v11H2zM11 6h5v11h-5z" fill="#eee" stroke="#222" stroke-width="1.300"/><path d="M3 2h3v4H3zM12 2h3v4h-3z" fill="#444"/><path d="M7 7h4v4H7z" fill="#444"/></symbol>
<symbol id="person" viewBox="0 0 18 18"><ellipse cx="9" cy="6" rx="4" ry="5" fill="#e8e8e8"/><path d="M1.500 17c0-4 5-3 5-5h5c0 2 5 1 5 5z" fill="#fff"/></symbol>
<symbol id="exch" viewBox="0 0 18 18"><path d="M2 2h5l2 4 2-4h5l-4 7 4 7h-5l-2-4-2 4H2l4-7z" fill="#2f6dbf" stroke="#173d75" stroke-width=".6"/></symbol>
<symbol id="stay" viewBox="0 0 18 18"><circle cx="8" cy="4" r="3" stroke="#fff" stroke-width="1.500"/><path d="M6 7C2 10 1 14 2 16" stroke="#fff" stroke-width="1.500"/><path d="M6 8h10v9H6z" fill="#f07a10" stroke="#7a3a05"/><path d="M11 9v5M9 12l2 2 2-2" stroke="#fff" stroke-width="1.300"/></symbol>
<symbol id="qhelp" viewBox="0 0 18 18"><circle cx="9" cy="9" r="8" fill="#fff" stroke="#234" stroke-width="1.400"/><text x="9" y="14" font-size="13" font-family="Liberation Sans" font-weight="700" text-anchor="middle" fill="#1a5fb0" stroke="none">?</text></symbol>
<symbol id="wkey" viewBox="0 0 18 18"><path d="M3 3c3-2 6 0 5 3l8 8c1 3-2 3-3 2L6 9C3 10 1 7 2 5l3 2 1-1z" fill="#f0f0f0" stroke="none"/></symbol>
</defs>
</svg>

<div class="app">
  <div class="logo"><span class="logo-a">A</span><span class="logo-dd"></span></div>

  <header class="title">
    <div class="qa">
      <svg class="i"><use href="#new"/></svg><svg class="i"><use href="#open"/></svg><svg class="i"><use href="#save"/></svg><svg class="i"><use href="#saveas"/></svg><svg class="i"><use href="#pubdoc"/></svg><span class="dd lt"></span>
      <svg class="i gap6"><use href="#print"/></svg><svg class="i"><use href="#undo"/></svg><span class="dd lt"></span><svg class="i gap3"><use href="#redo"/></svg><span class="dd lt"></span>
    </div>
    <div class="wscombo"><svg class="i s"><use href="#gear"/></svg><span>AutoCAD 经典</span><span class="dd push"></span></div>
    <div class="ddbtn"><span class="dd"></span></div>
    <div class="aero"><span class="app-name">AutoCAD 2013</span><span class="doc-name">Drawing1.dwg</span></div>
    <div class="arrbtn"><span class="tri"></span></div>
    <div class="search">键入关键字或短语</div>
    <div class="online">
      <svg class="i bin"><use href="#binoc"/></svg><svg class="i per"><use href="#person"/></svg><span class="login">登录</span><span class="dd lt push2"></span>
      <svg class="i ex"><use href="#exch"/></svg><svg class="i st"><use href="#stay"/></svg><span class="dd lt"></span><svg class="i hp"><use href="#qhelp"/></svg><span class="dd lt"></span>
    </div>
    <div class="winarea">
      <div class="wb w1"><span class="minb"></span></div><div class="wb w2"><span class="maxb"></span></div><div class="wb w3">X</div>
    </div>
  </header>

  <nav class="menu">
    <span>文件(<u>F</u>)</span><span>编辑(<u>E</u>)</span><span>视图(<u>V</u>)</span><span>插入(<u>I</u>)</span><span>格式(<u>O</u>)</span><span>工具(<u>T</u>)</span><span>绘图(<u>D</u>)</span><span>标注(<u>N</u>)</span><span>修改(<u>M</u>)</span><span>参数(<u>P</u>)</span><span>窗口(<u>W</u>)</span><span>帮助(<u>H</u>)</span>
    <div class="mdi"><span class="mdi-min"></span><span class="mdi-max"></span><span class="mdi-x">X</span></div>
  </nav>

  <div class="row r1">
    <div class="tb"><span class="grip"></span>
      <svg class="i"><use href="#new"/></svg><svg class="i"><use href="#open"/></svg><svg class="i"><use href="#save"/></svg><i class="sep"></i>
      <svg class="i"><use href="#print"/></svg><svg class="i"><use href="#preview"/></svg><svg class="i"><use href="#plot"/></svg><svg class="i"><use href="#pub3d"/></svg><i class="sep"></i>
      <svg class="i"><use href="#cut"/></svg><svg class="i"><use href="#copy"/></svg><svg class="i"><use href="#paste"/></svg><svg class="i"><use href="#pblock"/></svg><svg class="i"><use href="#match"/></svg><i class="sep"></i>
      <svg class="i m4"><use href="#undo"/></svg><span class="dd"></span><svg class="i"><use href="#redo"/></svg><span class="dd grey"></span><i class="sep"></i>
      <svg class="i"><use href="#hand"/></svg><svg class="i"><use href="#zoomr"/></svg><svg class="i"><use href="#zoomw"/></svg><svg class="i"><use href="#zoomp"/></svg><i class="sep"></i>
      <svg class="i m2"><use href="#props"/></svg><svg class="i"><use href="#center"/></svg><svg class="i"><use href="#palette"/></svg><svg class="i"><use href="#sheet"/></svg><svg class="i"><use href="#markup"/></svg><svg class="i"><use href="#calc"/></svg><i class="sep"></i>
      <svg class="i"><use href="#help"/></svg>
    </div>
    <div class="tb grey-tb"><span class="grip"></span>
      <svg class="i t"><use href="#tstyle"/></svg><div class="combo w118 c"><b>Standard</b><span class="dd"></span></div><i class="dbl"></i>
      <svg class="i t"><use href="#dstyle"/></svg><div class="combo w118 c"><b>ISO-25</b><span class="dd"></span></div><i class="dbl"></i>
      <svg class="i t"><use href="#tbstyle"/></svg><div class="combo w118 tight"><b>Standard</b><span class="dd"></span></div><i class="dbl"></i>
      <svg class="i t"><use href="#mlstyle"/></svg><div class="combo w118 c"><b>Standard</b><span class="dd"></span></div>
    </div>
  </div>

  <div class="row r2">
    <div class="tb grey-tb"><span class="grip"></span>
      <div class="combo w175"><b>AutoCAD 经典</b><span class="dd"></span></div><svg class="i t wk1"><use href="#gear"/></svg><svg class="i t wk2"><use href="#wsset"/></svg>
    </div>
    <div class="tb grey-tb laytb"><span class="grip"></span>
      <svg class="i t lay0"><use href="#layers"/></svg>
      <div class="combo w298 laycombo"><svg class="i s"><use href="#bulb"/></svg><svg class="i s"><use href="#sun"/></svg><svg class="i s"><use href="#vpfrz"/></svg><svg class="i s lk"><use href="#lock"/></svg><span class="sw"></span><b class="zero">0</b><span class="dd"></span></div>
      <svg class="i t lay1"><use href="#laycur"/></svg><svg class="i t lay2"><use href="#layprev"/></svg><svg class="i t lay2"><use href="#laysnap"/></svg>
    </div>
    <div class="tb grey-tb flushl">
      <div class="combo w150"><span class="coloricon"></span><b>白</b><span class="dd"></span></div><i class="dbl"></i>
      <div class="combo w158 ser"><span class="ln l1"></span><b>ByLayer</b><span class="dd"></span></div><i class="dbl"></i>
      <div class="combo w124 ser"><span class="ln l2"></span><b>ByLayer</b><span class="dd"></span></div><i class="dbl"></i>
      <div class="combo w119 ser off"><b>BYCOLOR</b><span class="dd grey"></span></div>
    </div>
  </div>

  <div class="row r3">
    <div class="tb"><span class="grip"></span>
      <svg class="i"><use href="#solid"/></svg><svg class="i"><use href="#box"/></svg><svg class="i"><use href="#wedge"/></svg><svg class="i"><use href="#cone"/></svg><svg class="i"><use href="#sphere"/></svg><svg class="i"><use href="#cyl"/></svg><svg class="i"><use href="#torus"/></svg><svg class="i"><use href="#pyr"/></svg><svg class="i"><use href="#helix"/></svg><svg class="i"><use href="#plane"/></svg><i class="sep"></i>
      <svg class="i"><use href="#extrude"/></svg><svg class="i"><use href="#press"/></svg><svg class="i"><use href="#sweep"/></svg><svg class="i"><use href="#revolve"/></svg><svg class="i"><use href="#loft"/></svg><i class="sep"></i>
      <svg class="i"><use href="#union"/></svg><svg class="i"><use href="#subtr"/></svg><svg class="i"><use href="#inter"/></svg><i class="sep"></i>
      <svg class="i"><use href="#move3"/></svg><svg class="i"><use href="#rot3"/></svg><svg class="i"><use href="#align3"/></svg><svg class="i"><use href="#array3"/></svg>
    </div>
    <div class="tb"><span class="grip"></span>
      <svg class="i"><use href="#union"/></svg><svg class="i"><use href="#subtr"/></svg><svg class="i"><use href="#inter"/></svg><i class="sep"></i>
      <svg class="i"><use href="#cubef"/></svg><svg class="i"><use href="#movef"/></svg><svg class="i"><use href="#offf"/></svg><svg class="i"><use href="#delf"/></svg><svg class="i"><use href="#rotf"/></svg><svg class="i"><use href="#taper"/></svg><svg class="i"><use href="#copyf"/></svg><svg class="i"><use href="#colorf"/></svg><i class="sep"></i>
      <svg class="i"><use href="#fedge"/></svg><svg class="i"><use href="#cedge"/></svg><svg class="i"><use href="#cpedge"/></svg><svg class="i"><use href="#colorf"/></svg><i class="sep"></i>
      <svg class="i"><use href="#imprint"/></svg><svg class="i"><use href="#clean"/></svg><svg class="i"><use href="#separ"/></svg><svg class="i"><use href="#shell"/></svg><svg class="i"><use href="#check"/></svg>
    </div>
    <div class="tb vstb"><span class="grip"></span>
      <svg class="i"><use href="#ball3"/></svg><i class="sep"></i>
      <svg class="i"><use href="#wire"/></svg><svg class="i"><use href="#hid"/></svg><svg class="i"><use href="#concept"/></svg><svg class="i"><use href="#real"/></svg><i class="sep"></i>
      <svg class="i"><use href="#vsman"/></svg>
    </div>
  </div>

  <div class="row r4">
    <div class="tb"><span class="grip"></span>
      <svg class="i"><use href="#vman"/></svg><i class="sep"></i>
      <svg class="i"><use href="#vtop"/></svg><svg class="i"><use href="#vbot"/></svg><svg class="i"><use href="#vleft"/></svg><svg class="i"><use href="#vright"/></svg><svg class="i"><use href="#vfront"/></svg><svg class="i"><use href="#vback"/></svg><i class="sep"></i>
      <svg class="i"><use href="#iso1"/></svg><svg class="i"><use href="#iso2"/></svg><svg class="i"><use href="#iso3"/></svg><svg class="i"><use href="#iso4"/></svg><i class="sep"></i>
      <svg class="i m2"><use href="#camera"/></svg><i class="sep"></i>
      <svg class="i m2"><use href="#backv"/></svg><div class="combo w137"><span class="dd grey"></span></div>
    </div>
  </div>

  <main class="main">
    <aside class="vbar left">
      <span class="hgrip"></span>
      <svg class="i"><use href="#line"/></svg><svg class="i"><use href="#xline"/></svg><svg class="i"><use href="#pline"/></svg><svg class="i"><use href="#poly"/></svg><svg class="i"><use href="#rect"/></svg><svg class="i"><use href="#arc"/></svg><svg class="i"><use href="#circ"/></svg><svg class="i"><use href="#cloud"/></svg><svg class="i"><use href="#spline"/></svg><svg class="i"><use href="#ell"/></svg><svg class="i"><use href="#earc"/></svg><svg class="i"><use href="#insert"/></svg><svg class="i"><use href="#block"/></svg><svg class="i"><use href="#point"/></svg><svg class="i"><use href="#hatch"/></svg><svg class="i"><use href="#grad"/></svg><svg class="i"><use href="#region"/></svg><svg class="i"><use href="#table"/></svg><span class="biga">A</span><svg class="i"><use href="#addsel"/></svg>
    </aside>

    <section class="work">
      <div class="vp-wrap">
        <div class="viewport">
          <span class="vplabel">[−][自定义视图][真实]</span>
          <svg class="scene" viewBox="30 155 1199 697" width="1199" height="697">
            <defs>
              <filter id="b1"><feGaussianBlur stdDeviation="1.600"/></filter>
              <filter id="b6" x="-100%" y="-200%" width="300%" height="500%"><feGaussianBlur stdDeviation="7"/></filter>
              <filter id="b12" x="-100%" y="-200%" width="300%" height="500%"><feGaussianBlur stdDeviation="14"/></filter>
              <linearGradient id="bulbg" x1=".35" y1="0" x2=".6" y2="1"><stop offset="0" stop-color="#6a3737"/><stop offset=".45" stop-color="#5c2e2e"/><stop offset=".8" stop-color="#3e1c1c"/><stop offset="1" stop-color="#291212"/></linearGradient>
              <clipPath id="bulbc"><path d="M452 543C456 522 470 488 497 462C518 443 545 431 577 427C590 426 603 426 613 427C634 431 668 447 693 467C699 478 702 487 702 497C700 515 695 528 687 543C678 560 670 570 660 580C640 597 625 605 610 610C598 614 585 617 573 617H547C525 613 505 607 490 600C478 592 470 587 463 580C458 570 456 556 452 543Z"/></clipPath>
            </defs>
            <g class="ring">
              <ellipse cx="1129" cy="243" rx="24" ry="64" transform="rotate(-24 1129 243)"/>
            </g>
            <g class="cube">
              <path class="ct" d="M1117 212L1155 201L1181 220L1140 233Z"/>
              <path class="cl" d="M1117 212L1140 233L1138 273L1118 250Z"/>
              <path class="cr" d="M1140 233L1181 220L1178 258L1138 273Z"/>
              <path class="cd" d="M1117 212L1140 233L1181 220M1140 233L1138 273"/>
              <text class="ctx" transform="translate(1147 224) rotate(18) scale(1.100 .7)">下</text>
              <text class="ctx" transform="translate(1122 243) rotate(22) scale(.8 1.200)">前</text>
              <text class="ctx" transform="translate(1150 253) rotate(-15) skewX(-15)">左</text>
            </g>
            <ellipse class="ringf" cx="1129" cy="243" rx="24" ry="64" transform="rotate(-24 1129 243)"/>
            <text class="ctx2" transform="translate(1114 192) rotate(-8)">北</text>
            <text class="ctx2" transform="translate(1119 292) rotate(65) scale(1 .8)">南</text>
            <text class="ctx2" transform="translate(1151 288) rotate(-70)">西</text>
            <g class="pipe-left">
              <ellipse class="cap" cx="108" cy="755" rx="17" ry="12" transform="rotate(22 108 755)"/>
              <path class="p0 wl" d="M108 755C122 716 138 672 190 646C240 623 330 609 400 586L462 563"/>
              <g filter="url(#b1)">
                <path class="p1 wl" d="M108 755C122 716 138 672 190 646C240 623 330 609 400 586L462 563"/>
                <path class="p2 wl" d="M108 755C122 716 138 672 190 646C240 623 330 609 400 586L462 563"/>
                <path class="p3 wl" d="M109 755C123 716 139 673 191 647C241 624 331 610 401 587L462 564"/>
                <path class="p4 wl" d="M110 755C124 718 141 675 193 649C243 626 333 612 403 589L462 566"/>
              </g>
              <ellipse class="cap2" cx="108" cy="755" rx="16" ry="12" transform="rotate(22 108 755)"/>
            </g>
            <g class="pipe-right">
              <path class="p0 wr" d="M698 481L850 435C950 405 1040 380 1078 325C1098 292 1101 240 1096 198"/>
              <g filter="url(#b1)">
                <path class="p1 wr" d="M698 481L850 435C950 405 1040 380 1078 325C1098 292 1101 240 1096 198"/>
                <path class="p2 wr" d="M698 481L850 435C950 405 1040 380 1078 325C1098 292 1101 240 1096 198"/>
                <path class="p3 wr" d="M698 482L850 436C950 406 1039 380 1076 324C1096 291 1099 240 1094 198"/>
                <path class="p4 wr" d="M698 484L850 438C950 408 1036 379 1073 322C1093 290 1095 240 1090 198"/>
              </g>
              <ellipse class="top" cx="1096" cy="197" rx="16" ry="12"/>
              <path class="band" d="M694 466L706 464C711 472 713 485 711 494L703 496C705 486 701 474 694 466Z"/>
            </g>
            <path class="bulb" d="M452 543C456 522 470 488 497 462C518 443 545 431 577 427C590 426 603 426 613 427C634 431 668 447 693 467C699 478 702 487 702 497C700 515 695 528 687 543C678 560 670 570 660 580C640 597 625 605 610 610C598 614 585 617 573 617H547C525 613 505 607 490 600C478 592 470 587 463 580C458 570 456 556 452 543Z"/>
            <g clip-path="url(#bulbc)">
              <ellipse class="shade" cx="690" cy="520" rx="45" ry="95" filter="url(#b12)"/>
              <ellipse class="shade2" cx="470" cy="585" rx="50" ry="20" transform="rotate(30 470 585)" filter="url(#b6)"/>
              <ellipse class="hl3" cx="625" cy="540" rx="44" ry="22" transform="rotate(-20 625 540)" filter="url(#b12)"/>
              <ellipse class="hl2" cx="510" cy="515" rx="58" ry="15" transform="rotate(-35 510 515)" filter="url(#b6)"/>
              <ellipse class="hl1" cx="517" cy="508" rx="24" ry="6" transform="rotate(-30 517 508)" filter="url(#b6)"/>
            </g>
            <g class="ucs">
              <path class="ax-g" d="M84 801L122 788"/>
              <path class="ax-b" d="M80 803V841"/>
              <path class="ax-r" d="M58 778L80 800"/>
              <path class="lab-r" d="M54 760L67 773M67 760L54 773"/>
              <path class="lab-g" d="M122 770L127 776L135 770M127 776V783"/>
              <path class="lab-b" d="M84 826H92L84 837H94"/>
            </g>
          </svg>
          <div class="named">未命名<span class="named-tri"></span></div>
        </div>
        <div class="vscroll"><span class="up"></span><span class="vthumb"></span><span class="down"></span></div>
      </div>
      <div class="tabs">
        <div class="nav"><span class="n n1"></span><span class="n n2"></span><span class="n n3"></span><span class="n n4"></span></div>
        <span class="tab on">模型</span><span class="tab">布局1</span><span class="tab">布局2</span>
        <div class="hscroll"><span class="hleft"></span><span class="hthumb"></span><span class="hright"></span></div>
      </div>
    </section>

    <aside class="rcol">
      <div class="vbar rbar">
        <span class="hgrip"></span>
        <svg class="i"><use href="#erase"/></svg><svg class="i"><use href="#copy2"/></svg><svg class="i"><use href="#mirror"/></svg><svg class="i"><use href="#offset"/></svg><svg class="i"><use href="#array"/></svg><svg class="i"><use href="#move"/></svg><svg class="i"><use href="#rotate"/></svg><svg class="i"><use href="#scale"/></svg><svg class="i"><use href="#stretch"/></svg><svg class="i"><use href="#trim"/></svg><svg class="i"><use href="#extend"/></svg><svg class="i"><use href="#brkp"/></svg><svg class="i"><use href="#brk"/></svg><svg class="i"><use href="#join"/></svg><svg class="i"><use href="#cham"/></svg><svg class="i"><use href="#fillet"/></svg><svg class="i"><use href="#blend"/></svg><svg class="i"><use href="#explode"/></svg>
      </div>
      <div class="vbar rbar2">
        <span class="hgrip"></span>
        <svg class="i"><use href="#ord1"/></svg><svg class="i"><use href="#ord2"/></svg><svg class="i"><use href="#ord3"/></svg><svg class="i"><use href="#ord4"/></svg><i class="hsep"></i><svg class="i"><use href="#abc"/></svg><svg class="i"><use href="#txtsc"/></svg>
      </div>
    </aside>
  </main>

  <div class="row dimrow">
    <div class="tb"><span class="grip"></span>
      <svg class="i"><use href="#dlin"/></svg><svg class="i"><use href="#dal"/></svg><svg class="i"><use href="#darc"/></svg><svg class="i"><use href="#dord"/></svg><i class="sep"></i>
      <svg class="i"><use href="#drad"/></svg><svg class="i"><use href="#djog"/></svg><svg class="i"><use href="#ddia"/></svg><svg class="i"><use href="#dang"/></svg><i class="sep"></i>
      <svg class="i"><use href="#dqk"/></svg><svg class="i"><use href="#dbase"/></svg><svg class="i"><use href="#dcont"/></svg><svg class="i"><use href="#dspc"/></svg><svg class="i"><use href="#dbrk"/></svg><i class="sep"></i>
      <svg class="i m2"><use href="#dtol"/></svg><svg class="i"><use href="#dcen"/></svg><svg class="i"><use href="#dins"/></svg><svg class="i"><use href="#djogl"/></svg><i class="sep"></i>
      <svg class="i"><use href="#dedit"/></svg><svg class="i"><use href="#dtxt"/></svg><svg class="i"><use href="#dupd"/></svg><i class="sep"></i>
      <div class="combo w118 c mc"><b>ISO-25</b><span class="dd"></span></div><svg class="i t2"><use href="#dstyle"/></svg>
    </div>
  </div>

  <div class="cmd">
    <div class="cmd-side"><span class="hgrip dark"></span><span class="cx">✕</span><svg class="i wk"><use href="#wkey"/></svg></div>
    <div class="cmd-body">
      <div class="hist"><div>命令： 指定对角点或 [栏选(F)/圈围(WP)/圈交(CP)]:</div><div>命令： 指定对角点或 [栏选(F)/圈围(WP)/圈交(CP)]:</div></div>
      <div class="input"><span class="prompt">&gt;_</span><span class="dd grey"></span><span class="ph">键入命令</span></div>
    </div>
  </div>

  <footer class="status">
    <span class="coords">1926.7432, 367.9807, 0.0000</span>
    <div class="sb-left">
      <span class="sb"><svg class="i"><use href="#snapinf"/></svg></span><span class="sb"><svg class="i"><use href="#snap"/></svg></span><span class="sb"><svg class="i"><use href="#grid"/></svg></span><span class="sb"><svg class="i"><use href="#ortho"/></svg></span><span class="sb"><svg class="i"><use href="#polar"/></svg></span><span class="sb lit"><svg class="i"><use href="#osnap"/></svg></span><span class="sb lit"><svg class="i"><use href="#osnap3"/></svg></span><span class="sb act"><svg class="i"><use href="#ducs"/></svg></span><span class="sb"><svg class="i"><use href="#otrack"/></svg></span><span class="sb"><svg class="i"><use href="#dynp"/></svg></span><span class="sb"><svg class="i"><use href="#plus"/></svg></span><span class="sb"><svg class="i"><use href="#transp"/></svg></span><span class="sb"><svg class="i"><use href="#qprop"/></svg></span><span class="sb"><svg class="i"><use href="#selcyc"/></svg></span><span class="sb"><svg class="i"><use href="#cross"/></svg></span>
    </div>
    <div class="sb-right">
      <span class="model">模型</span><span class="sb"><svg class="i"><use href="#mdl"/></svg></span><span class="sb"><svg class="i"><use href="#lyt"/></svg></span><span class="sb blank"></span>
      <span class="sb scale"><svg class="i"><use href="#anno"/></svg><b>1:1</b><span class="dd"></span></span><span class="sb"><svg class="i"><use href="#anno2"/></svg></span><span class="sb"><svg class="i"><use href="#anno3"/></svg></span><i class="sgap"></i>
      <span class="sb"><svg class="i"><use href="#gear"/></svg></span><span class="sb"><svg class="i"><use href="#unlock"/></svg></span><span class="sb"><svg class="i"><use href="#hw"/></svg></span><span class="sb lamp"><svg class="i"><use href="#bulb"/></svg></span><span class="dd sdd"></span><span class="sb"><svg class="i"><use href="#win"/></svg></span>
    </div>
  </footer>

  <div class="wm">
    <svg class="paw" viewBox="1030 848 110 80" width="110" height="80">
      <ellipse cx="1071" cy="875" rx="11" ry="14" transform="rotate(-8 1071 875)"/>
      <ellipse cx="1090" cy="863" rx="8" ry="13" transform="rotate(-5 1090 863)"/>
      <ellipse cx="1109" cy="864" rx="8" ry="13" transform="rotate(8 1109 864)"/>
      <ellipse cx="1124" cy="882" rx="9" ry="14" transform="rotate(10 1124 882)"/>
      <path d="M1095 877C1112 877 1115 890 1122 898C1132 908 1118 926 1100 921C1092 919 1082 923 1074 921C1058 917 1055 902 1068 893C1077 887 1080 877 1095 877Z"/>
    </svg>
    <span class="wm-bai">Bai</span><span class="wm-du">du</span><span class="wm-jy">经验</span><span class="wm-url">jingyan.baidu.com</span>
  </div>
</div>
</body>
</html>
```

FILE: styles.css
```css
*{box-sizing:border-box}
html,body{margin:0;padding:0;height:100%}
body{overflow:hidden;background:#666;font-family:"Noto Sans","Noto Sans CJK SC",sans-serif;font-size:12px;color:#222}
.defs{position:absolute}
.app{position:relative;width:1280px;height:983px;overflow:hidden;background:#666;display:flex;flex-direction:column}
.i{display:block;flex:none;width:18px;height:18px;margin:0 2.5px;fill:none;stroke:#3a3a3a;stroke-width:1}
.i.s{margin:0;width:15px;height:15px}
.i.t{margin:0 1px 0 1px;width:18px}
.i.m4{margin-left:7px}
.i.m2{margin-left:4.5px}
.sep{flex:none;width:1px;height:19px;background:#999;margin:0 2px}
.dbl{flex:none;width:3px;height:21px;border-left:1px solid #9a9a9a;border-right:1px solid #9a9a9a;margin:0 2px}
.hsep{display:block;width:20px;height:1px;background:#aaa;margin:3px auto 4px}
.dd{flex:none;width:0;height:0;border:4px solid transparent;border-top:5px solid #111;border-bottom:0;margin:0 2px}
.dd.grey{border-top-color:#aaa}
.dd.lt{border-top-color:#555;border-left-width:3px;border-right-width:3px;border-top-width:3px}
.logo{position:absolute;left:0;top:0;width:40px;height:40px;background:linear-gradient(#9a9a9a,#7a7a7a);border-right:1px solid #444;border-bottom:1px solid #444;z-index:3;display:flex}
.logo-a{font:700 36px/40px "Liberation Sans",sans-serif;margin-left:3px;transform:skewX(-6deg);background:linear-gradient(#e23a30,#8a0c0c);-webkit-background-clip:text;background-clip:text;color:transparent}
.logo-dd{width:0;height:0;border:3px solid transparent;border-top:4px solid #222;border-bottom:0;margin:21px 0 0 3px}
.title{height:24px;flex:none;display:flex;align-items:center;background:linear-gradient(#8d8d8d,#6d6d6d);color:#111;padding-left:46px}
.qa{display:flex;align-items:center;width:227px}
.qa .i{margin:0 3px}
.qa .gap6{margin-left:4px}
.qa .gap3{margin-left:4px}
.wscombo{width:180px;height:21px;display:flex;align-items:center;gap:2px;background:linear-gradient(#e8e8e8,#c8c8c8);border:1px solid #999;border-radius:2px;font-size:12px;padding-left:3px}
.wscombo .push{margin-left:auto}
.ddbtn{width:15px;display:flex;justify-content:center;border-top:2px solid #111;padding-top:2px;margin-left:1px;height:10px}
.ddbtn .dd{margin:0}
.aero{width:247px;height:24px;background:linear-gradient(100deg,#245f9c 0,#1d6fb3 35%,#3f97d4 70%,#8ec4e8 100%);display:flex;align-items:center;color:#0d1f33;font-size:12.300px;padding-left:30px;gap:16px}
.arrbtn{width:13px;height:24px;background:#777;display:flex;align-items:center;justify-content:center}
.tri{width:0;height:0;border:4px solid transparent;border-left:5px solid #111;border-right:0}
.search{width:178px;height:21px;background:#fff;color:#8a8a8a;font-style:italic;font-size:11px;line-height:21px;padding-left:3px}
.online{width:252px;height:24px;background:linear-gradient(#8d8d8d,#6d6d6d);display:flex;align-items:center;color:#efefef}
.online .i{margin:0}
.online .bin{margin-left:4px}
.online .per{margin-left:6px}
.login{margin-left:3px;font-size:12px}
.online .push2{margin-left:60px}
.online .ex{margin-left:8px}
.online .st{margin-left:6px}
.online .hp{margin-left:22px}
.winarea{flex:1;height:24px;background:linear-gradient(90deg,#2a6fb0,#1f5a94 50%,#3b83c0);display:flex;padding-left:17px;align-items:flex-start}
.wb{height:18px;border:1px solid #bcd3e6;border-top:0;background:rgba(255,255,255,.12);color:#fff;display:flex;align-items:center;justify-content:center;font:700 12px "Liberation Sans",sans-serif}
.w1{width:25px;border-radius:0 0 0 4px}
.w2{width:28px;border-left:0}
.w3{width:50px;border-left:0;border-radius:0 0 4px 0}
.minb{display:block;width:10px;height:3px;background:#fff;margin-top:5px}
.maxb{display:block;width:10px;height:10px;border:2px solid #fff;background:transparent}
.menu{height:20px;flex:none;display:flex;align-items:center;gap:25.200px;padding-left:55px;background:linear-gradient(#5a5a5a,#8d8d8d);color:#eee;font-size:12px;position:relative}
.menu span{white-space:nowrap}
.mdi{margin-left:auto;display:flex;align-items:center;gap:7px;padding-right:4px}
.mdi-min{display:block;width:10px;height:2px;background:#111;margin-top:8px}
.mdi-max{display:block;width:11px;height:11px;border:1px solid #111}
.mdi .mdi-x{font:700 12px "Liberation Sans",sans-serif;color:#111}
.row{display:flex;flex:none;align-items:flex-start}
.r1{padding:1px 0 0 3px;height:28px;gap:2px}
.r1 .tb{width:647px}
.r1 .tb.grey-tb{width:593px}
.r1 .dbl{margin:0 2px 0 3px}
.r1 .dbl + .i.t{margin:0 2.5px}
.combo.tight{padding-left:4px}
.r2{padding:1px 0 0 3px;height:27px;gap:5px}
.r2 .tb:nth-child(1){width:225px}
.r2 .tb:nth-child(2){width:399px}
.r2 .tb:nth-child(3){margin-left:3px;width:574px}
.r2 .i.wk1{margin:0 2.5px 0 4px}
.r2 .i.wk2{margin:0 2.5px}
.r2 .i.lay0{margin:0 5px 0 2px}
.r2 .i.lay1{margin:0 2.5px 0 4px}
.r2 .i.lay2{margin:0 2.5px}
.laycombo{padding-left:1px}
.laycombo .lk{margin-left:4px}
.r3{padding:0 0 0 3px;height:28px;gap:3px}
.r3 .tb:nth-child(1){width:530px}
.r3 .tb:nth-child(2){width:483px}
.r3 .tb.vstb{width:159px;margin-left:-1px}
.vstb .i{margin:0 2.7px}
.vstb .grip{margin-right:2px}
.r4{padding-left:3px;height:28px}
.r4 .tb{width:469px;height:23px}
.tb{height:24px;display:flex;align-items:center;background:#ececec;border:1px solid #2f2f2f;flex:none}
.grey-tb{background:#d9d9d9}
.flushl{padding-left:0}
.grip{flex:none;align-self:stretch;width:5px;background-color:#555;background-image:radial-gradient(#aaa 0.7px,transparent .8px);background-size:2.500px 3px;margin-right:0}
.combo{flex:none;height:21px;display:flex;align-items:center;background:linear-gradient(#f6f6f6,#d2d2d2);border:1px solid #aaa;border-radius:3px;padding:0 3px 0 8px;font-family:"Noto Sans","Noto Sans CJK SC",sans-serif}
.combo b{font-weight:400;color:#111;flex:1;white-space:nowrap;margin-bottom:2px}
.combo.c b{text-align:center;padding-right:14px}
.combo .dd{margin-left:auto}
.w118{width:118px}.w175{width:175px}.w298{width:298px}.w150{width:150px}.w158{width:158px}.w124{width:124px}.w119{width:119px}.w137{width:137px}
.sw{flex:none;display:block;width:11px;height:11px;background:#fff;border:1px solid #111;margin-left:3px}
.combo .zero{margin-left:8px}
.coloricon{flex:none;display:block;width:10px;height:10px;border:1px solid #111;background:linear-gradient(135deg,#111 50%,#fff 50%);margin-right:2px}
.ser{font-family:"Liberation Serif","Noto Sans CJK SC",serif;padding-left:4px}
.ser b{font-family:"Liberation Mono",monospace;font-size:10.500px;letter-spacing:-.3px}
.ln{flex:none;display:block;height:1px;background:#111}
.l1{width:60px;margin-right:5px}
.l2{width:36px;margin-right:5px}
.off{padding-left:9px}
.off b{color:#8a8a8a}
.main{height:715px;flex:none;display:flex;margin-top:0;padding-left:1px}
.vbar{width:24px;background:#ececec;border:1px solid #2f2f2f;display:flex;flex-direction:column;align-items:center;flex:none}
.vbar .i{margin:2px 0}
.left{height:449px;margin-right:5px}
.hgrip{display:block;align-self:stretch;height:7px;flex:none;background-color:#555;background-image:radial-gradient(#aaa .7px,transparent .8px);background-size:3px 2.500px}
.hgrip.dark{background-color:#6a6a6a;height:9px;width:20px;margin:4px auto 0}
.biga{font:400 20px/22px "Liberation Sans",sans-serif;color:#333;height:22px}
.work{width:1217px;flex:none;background:#f3f3f3;display:flex;flex-direction:column;height:715px}
.vp-wrap{display:flex;height:697px;flex:none}
.viewport{position:relative;width:1199px;height:697px;background:#212831;overflow:hidden}
.scene{position:absolute;left:0;top:0;display:block}
.vplabel{position:absolute;left:5px;top:5px;color:#e8e8e8;font-size:12px;z-index:1}
.vscroll{width:18px;background:#efefef;display:flex;flex-direction:column;align-items:center;position:relative}
.up{margin-top:6px;width:0;height:0;border:4px solid transparent;border-bottom:4px solid #333;border-top:0}
.vthumb{width:14px;height:15px;margin-top:39px;background:linear-gradient(90deg,#fff,#ccc);border:1px solid #aaa;border-radius:2px}
.down{margin-top:auto;margin-bottom:5px;width:0;height:0;border:4px solid transparent;border-top:4px solid #333;border-bottom:0}
.tabs{height:18px;display:flex;align-items:flex-start;border-bottom:2px solid #fff;background:#f0f0f0;font-size:12px;color:#222;padding-left:2px}
.nav{display:flex;width:57px;height:15px;align-items:center}
.n{flex:none;width:0;height:0;border:5px solid transparent;margin:0 4px}
.n1,.n2{border-right:6px solid #555;border-left:0}
.n3,.n4{border-left:6px solid #555;border-right:0}
.n1{box-shadow:-1px 0 0 #555}
.n4{box-shadow:1px 0 0 #555}
.tab{height:15px;line-height:16px;padding:0 8px;white-space:nowrap;position:relative}
.tab::after{content:"";position:absolute;right:1px;top:0;width:1px;height:100%;background:#555;transform:skewX(-25deg)}
.tab.on{background:#2a3038;color:#eee;padding:0 7px 0 6px;margin-left:3px;clip-path:polygon(0 0,100% 0,88% 100%,14% 100%)}
.tab.on::after{display:none}
.hscroll{height:15px;width:425px;margin-left:auto;display:flex;align-items:center;position:relative;background:#e8e8e8;border-left:5px solid #fff;outline:1px solid #ccc}
.hleft{width:0;height:0;border:4px solid transparent;border-right:4px solid #333;border-left:0;margin-left:9px}
.hthumb{width:15px;height:13px;margin-left:42px;background:linear-gradient(#fff,#ccc);border:1px solid #aaa;border-radius:2px}
.hright{width:0;height:0;border:4px solid transparent;border-left:4px solid #333;border-right:0;margin-left:auto;margin-right:23px}
.rcol{display:flex;flex-direction:column;gap:3px;margin-left:6px;width:24px;flex:none}
.rbar{height:408px}
.rbar2{height:140px}
.dimrow{padding:0 0 0 30px;height:32px;margin-top:3px}
.dimrow .tb{width:640px}
.dimrow .grip{margin-right:2px}
.mc{margin-left:1px}
.t2{margin-left:3px}
.cmd{height:58px;flex:none;display:flex}
.cmd-side{width:22px;flex:none;background:#6c6c6c;display:flex;flex-direction:column;align-items:center}
.cx{color:#f2f2f2;font:700 14px/22px "DejaVu Sans",sans-serif;margin-top:0}
.cmd-side .wk{margin:1px 0 0;width:18px;height:18px}
.cmd-body{flex:1;display:flex;flex-direction:column}
.hist{height:34px;background:#c6c6c6;border-bottom:1px solid #555;padding:2px 0 0 4px;font:12.700px/15px "Liberation Mono","Noto Sans CJK SC",monospace;color:#111}
.input{flex:1;background:#fff;display:flex;align-items:center;padding-left:6px;border-bottom:2px solid #222}
.prompt{flex:none;width:14px;height:14px;background:#d8dde4;border:1px solid #aaa;font:10px/12px "Liberation Mono",monospace;color:#333;text-align:center}
.ph{color:#aaa;font-style:italic;margin-left:6px;font-size:12px;letter-spacing:1.500px}
.status{flex:1;display:flex;align-items:stretch;background:linear-gradient(#5e5e5e,#7e7e7e);position:relative}
.coords{width:206px;padding-left:12px;font:12px/21px "Liberation Sans",sans-serif;color:#8a8a8a;letter-spacing:.4px}
.sb-left,.sb-right{display:flex;align-items:stretch}
.sb{flex:none;width:22px;display:flex;align-items:center;justify-content:center;border-right:1px solid #555;background:linear-gradient(#8a8a8a,#a2a2a2)}
.sb .i{margin:0}
.sb.lit{background:linear-gradient(#7c7c7c,#9a9a9a)}
.sb.act{background:linear-gradient(#8ebccf,#b9d8e4)}
.sb-right{margin-left:auto;padding-right:3px}
.model{width:27px;color:#111;font-size:12px;line-height:21px;text-align:center;background:#8f8f8f;border-right:1px solid #555}
.sb.blank{width:20px}
.sb.scale{width:54px;gap:2px;justify-content:flex-start;padding-left:2px}
.sb.scale b{font-weight:400;font-size:12px;color:#111}
.sb.scale .dd{margin:0}
.sgap{width:9px;background:#5c5c5c}
.sb.lamp{width:25px;background:#777;border:1px solid #444}
.sdd{align-self:center;margin:0 4px}
.wm{position:absolute;left:0;top:0;width:1280px;height:983px;pointer-events:none;color:rgba(255,255,255,.65);font-family:"Liberation Sans",sans-serif}
.paw{position:absolute;left:1030px;top:848px;fill:rgba(235,235,235,.65)}
.wm span{position:absolute;white-space:nowrap}
.wm-bai{left:982px;top:867px;font-size:52px;font-weight:700;line-height:60px}
.wm-du{left:1075px;top:884px;font-size:30px;font-weight:700;line-height:34px;color:#6a6a6a}
.wm-jy{left:1129px;top:873px;font:700 38px/46px "Noto Sans CJK SC",sans-serif}
.wm-url{left:983px;top:921px;font-size:27.500px;line-height:36px;color:rgba(255,255,255,.72);text-shadow:0 0 2px rgba(110,110,110,.75)}
.ring ellipse{fill:none;stroke:#3d434b;stroke-width:8}
.ringf{fill:none;stroke:rgba(120,130,140,.28);stroke-width:8;stroke-dasharray:0 18 60 400}
.ct{fill:#a9a9a9}.cl{fill:#9a9a9a}.cr{fill:#8c8c8c}
.cd{fill:none;stroke:#4a4f55;stroke-dasharray:4 2}
.ctx{font:15px "Noto Sans CJK SC",sans-serif;fill:#4d4d4d}
.ctx2{font:12px "Noto Sans CJK SC",sans-serif;fill:#b9bdc2}
.p0,.p1,.p2,.p3,.p4{fill:none}
.p0{stroke:#8e8e8e}.p1{stroke:#adadad}.p2{stroke:#c4c4c4}.p3{stroke:#dcdcdc}.p4{stroke:#f1f1f1}
.wl.p0{stroke-width:35px}.wl.p1{stroke-width:31px}.wl.p2{stroke-width:23px}.wl.p3{stroke-width:13px}.wl.p4{stroke-width:4px}
.wr.p0{stroke-width:32px}.wr.p1{stroke-width:28px}.wr.p2{stroke-width:21px}.wr.p3{stroke-width:12px}.wr.p4{stroke-width:4px}
.top{fill:#b5b5b5}
.cap{fill:#8f8f8f}
.cap2{fill:#cfcfcf}
.band{fill:#7d4141}
.bulb{fill:url(#bulbg)}
.shade{fill:#2a1313;opacity:.55}
.shade2{fill:#200e0e;opacity:.7}
.hl1{fill:#ffdede}
.hl2{fill:#f2b9b9;opacity:.85}
.hl3{fill:#c9a5a2;opacity:.85}
.ucs path{fill:none}
.ax-r{stroke:#c9302c;stroke-width:5px;stroke-linecap:round}
.ax-g{stroke:#2f9a26;stroke-width:5px;stroke-linecap:round}
.ax-b{stroke:#1350a8;stroke-width:5px}
.lab-r{stroke:#e02020;stroke-width:1.200px}
.lab-g{stroke:#2aa02a}
.lab-b{stroke:#2a6ad0}
.named{position:absolute;left:1089px;top:167px;width:58px;height:17px;border-radius:4px;background:#6b7180;color:#8c919e;font-size:10px;line-height:17px;padding-left:4px;letter-spacing:1px}
.named-tri{position:absolute;right:6px;top:6px;width:0;height:0;border:4px solid transparent;border-top:5px solid #8c919e;border-bottom:0}
```
